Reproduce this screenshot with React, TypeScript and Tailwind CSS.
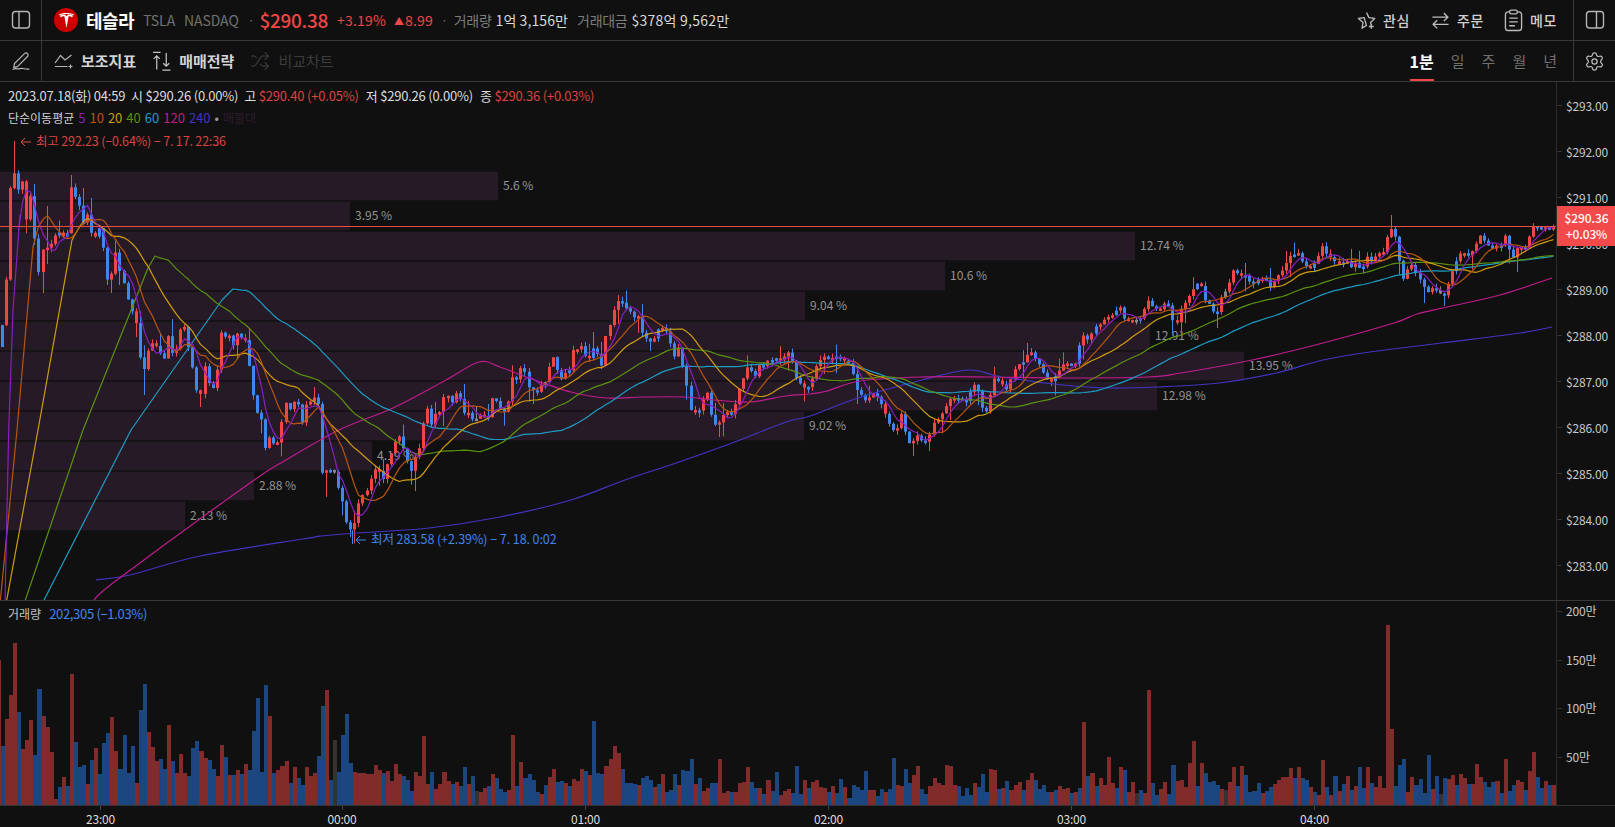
import React from "react";
import { Settings, Shuffle } from "lucide-react";
import { SiTesla } from "react-icons/si";

const V = `r120 b377 r298 r226 r70 b275 r388 r361 r301 b406 b208 r289 r322 r397 r538 b502 r472 b499 r163 b367
b442 b436 r493 b421 r385 b463 b370 b340 r292 r394 b448 b346 b460 b379 r490 b271 b193 r337 r382 r424
b418 b448 r316 b424 r460 r403 r460 b469 b385 b364 r394 r415 b421 b448 r469 r376 b412 r466 b466 r451
b463 r433 b451 b334 b235 b457 b196 r289 b460 r451 r439 r424 b490 r442 b475 b496 r442 r469 r460 b409
b259 r211 b481 g361 b457 b346 b283 b430 r457 r460 r460 r463 r463 r436 r451 b460 r454 r484 r433 r463
b469 b481 b514 r457 r469 r349 r493 b457 r508 r493 r457 r484 b493 r487 b499 b442 r493 b469 g514 r517
r505 b499 r463 b475 b508 b517 r511 r346 b499 r427 b475 b463 b481 b517 r523 b496 r472 r448 b487 b484
r490 b499 r478 r484 r448 b454 r466 b304 b460 b463 r439 r418 r379 r400 b448 b490 b490 b493 r496 b475
b469 b481 r502 b493 r463 b517 b511 b463 r496 b451 b454 b418 r493 b475 r514 r505 b490 b490 r418 r520
r514 b517 r517 r490 r487 r442 b487 b505 r505 b523 r481 b514 b457 r526 r514 r508 b520 b439 b523 r481
b505 r487 r481 r502 r505 b517 r499 b520 b478 r502 b535 b496 b502 b511 b454 r511 r511 b529 b508 r517
b508 b415 r496 r499 b448 b490 r466 r439 b508 b523 r499 r475 r490 r496 r436 r439 r496 b499 b529 b505
b526 r490 b502 b463 b517 r448 r451 b508 r505 b484 r511 r496 r487 b511 r481 r460 b481 b508 b496 b517
r517 b511 r499 r508 r505 b520 r517 b505 r307 b469 r460 b499 r475 r496 r412 r490 b505 r442 b451 r517
r487 g520 b511 r520 r211 b490 b526 r508 r487 b523 b436 r484 r481 r502 r430 r364 b499 r430 b460 b487
b484 b496 r508 g511 r487 r442 b499 r439 b466 b517 b514 b490 r520 b514 b502 r493 r481 r472 r472 r445
b475 r442 b475 b481 r502 b517 r526 r421 b502 r526 b469 r514 b493 r469 b511 r499 b442 b505 r442 b490
r502 r469 r505 r16 r328 b499 b436 b418 r517 r472 b496 b478 b520 b406 r508 b469 g523 b475 r478 r466
b496 r463 r475 b493 r493 r433 r472 b487 b502 b487 r484 b520 r418 b514 b496 r481 r487 b511 r454 r397
b472 b505 r484 b496 r496`
  .split(/\s+/)
  .map((s) => ({ c: s[0], top: Number(s.slice(1)) }));

const PATH = [
  0,347, 4,312, 7,273, 11,176, 15,173, 19,192, 23,180, 27,225, 31,192, 35,245, 39,276, 43,250, 47,248, 51,245, 55,236, 59,232, 63,236, 67,240, 71,186, 75,196, 79,203,
  83,224, 87,212, 91,232, 95,238, 99,226, 103,243, 107,280, 111,277, 115,250, 119,270, 123,278, 127,292, 131,312, 135,310, 139,345, 143,378, 147,354, 152,343, 156,345, 160,352,
  164,362, 168,334, 173,355, 177,348, 181,327, 185,327, 189,350, 193,370, 197,393, 201,394, 205,364, 209,382, 213,390, 217,375, 221,332, 225,337, 229,334, 233,347, 237,333, 241,338,
  245,337, 249,362, 253,393, 258,415, 262,420, 267,460, 270,433, 274,445, 278,442, 282,419, 286,402, 290,410, 295,401, 299,405, 303,425, 306,405, 310,402, 315,397, 319,405, 322,473,
  327,470, 331,470, 335,472, 339,490, 343,503, 347,525, 351,530, 356,520, 359,500, 364,493, 367,492, 371,480, 376,468, 379,470, 384,480, 388,462, 392,452, 396,440, 399,435, 404,450,
  407,460, 412,472, 415,458, 420,447, 424,420, 428,407, 432,427, 436,412, 440,412, 444,395, 448,395, 453,403, 457,392, 461,400, 464,413, 468,412, 473,420, 478,418, 482,413, 488,420,
  492,398, 496,400, 501,410, 505,412, 509,400, 513,374, 517,380, 522,363, 526,377, 529,387, 533,390, 538,392, 541,385, 545,384, 549,368, 554,356, 558,372, 562,380, 566,372, 570,370,
  573,350, 577,350, 581,345, 586,357, 590,358, 594,347, 598,355, 602,367, 605,337, 610,327, 614,311, 619,300, 623,303, 627,309, 631,312, 635,318, 639,316, 643,335, 646,338, 651,342,
  655,338, 659,328, 663,328, 667,332, 671,345, 675,358, 679,346, 683,370, 687,388, 691,410, 695,410, 699,412, 704,398, 708,392, 712,418, 715,425, 720,422, 724,414, 728,412, 733,415,
  736,402, 739,390, 743,380, 747,367, 751,370, 755,378, 759,365, 764,366, 768,360, 773,360, 777,358, 781,360, 785,356, 789,352, 793,362, 797,380, 801,384, 807,390, 812,380, 816,367,
  823,356, 828,358, 833,358, 838,356, 843,360, 848,362, 853,372, 858,392, 863,396, 867,403, 872,392, 877,396, 882,405, 886,415, 892,430, 897,430, 902,412, 907,440, 911,445, 917,435,
  922,441, 927,442, 933,424, 940,418, 946,407, 951,398, 956,398, 961,399, 966,402, 974,384, 979,392, 983,410, 988,412, 993,378, 998,380, 1003,385, 1007,390, 1012,375, 1018,365,
  1024,362, 1030,350, 1035,358, 1040,365, 1046,378, 1051,382, 1058,373, 1065,362, 1070,365, 1075,366, 1082,334, 1088,340, 1095,327, 1100,325, 1106,318, 1113,315, 1120,306, 1125,320,
  1131,320, 1136,320, 1141,318, 1148,300, 1153,307, 1160,310, 1167,300, 1173,322, 1177,324, 1181,310, 1186,302, 1193,290, 1200,280, 1205,300, 1211,305, 1216,318, 1221,298, 1228,288,
  1233,270, 1240,275, 1245,275, 1252,285, 1257,280, 1261,278, 1267,280, 1271,288, 1276,278, 1283,270, 1290,256, 1299,253, 1304,265, 1311,268, 1316,262, 1323,245, 1327,255, 1332,258,
  1335,262, 1339,262, 1343,264, 1347,260, 1351,268, 1355,262, 1359,268, 1363,268, 1367,256, 1371,262, 1375,257, 1379,253, 1383,254, 1387,238, 1392,228, 1396,238, 1399,258, 1403,280,
  1407,270, 1411,264, 1415,272, 1419,278, 1423,282, 1427,295, 1431,287, 1435,290, 1439,290, 1443,299, 1447,289, 1451,275, 1455,265, 1459,255, 1463,251, 1467,257, 1472,252, 1476,245,
  1480,235, 1484,240, 1488,245, 1492,249, 1497,245, 1501,248, 1504,232, 1508,242, 1512,262, 1516,250, 1520,245, 1524,251, 1528,243, 1532,226, 1536,226, 1540,229, 1544,225, 1548,231, 1552,227,
];

function pathAt(x: number) {
  if (x <= PATH[0]) return PATH[1];
  for (let i = 2; i < PATH.length; i += 2) {
    if (x <= PATH[i]) {
      const t = (x - PATH[i - 2]) / (PATH[i] - PATH[i - 2]);
      return PATH[i - 1] + (PATH[i + 1] - PATH[i - 1]) * t;
    }
  }
  return PATH[PATH.length - 1];
}

const hash = (n: number) => {
  const s = Math.sin(n * 12.9898) * 43758.5453;
  return s - Math.floor(s);
};

const left = (n: number) => Math.round(1 + 4.05 * (n - 1));
const center = (n: number) => left(n) + 1.5;
const closes = V.map((_, n) => pathAt(center(n)));
const HIGH: Record<number, number> = {
  4: 141, 18: 175, 344: 215, 12: 206, 137: 405, 21: 188, 23: 198, 43: 319, 62: 328, 78: 387, 115: 384, 147: 332, 153: 295,
};
const LOW: Record<number, number> = {
  87: 537, 375: 272, 9: 245, 1: 333, 11: 293, 27: 285, 28: 293, 36: 395, 50: 407, 81: 497, 103: 491, 161: 351, 178: 437,
  226: 456, 230: 451, 352: 303, 357: 306,
};

const candles = V.map((v, n) => {
  const cl = closes[n];
  const op = n === 0 ? cl + 40 : closes[n - 1];
  const top = Math.min(cl, op);
  const bot = Math.max(cl, op, top + 2.5);
  const a = hash(n + 1);
  const b = hash(n + 501);
  const hi = HIGH[n] ?? top - (n > 365 ? a * 3 : a > 0.9 ? 12 : a * 5);
  const lo = LOW[n] ?? bot + (b > 0.9 ? 14 : b * 5);
  return { n, c: v.c, top, bot, hi, lo };
});

function ma(N: number, from: number, prefix: number[][]) {
  const pts: string[] = prefix.map((p) => p.join(","));
  for (let i = from; i < closes.length; i++) {
    let s = 0;
    for (let j = i - N + 1; j <= i; j++) s += closes[Math.max(0, j)];
    pts.push(`${center(i)},${(s / N).toFixed(1)}`);
  }
  return `M${pts.join(" L")}`;
}

function smooth(s: string) {
  const p = s.split(" ").map((q) => q.split(",").map(Number));
  let d = `M${p[0][0]} ${p[0][1]}`;
  for (let i = 0; i < p.length - 1; i++) {
    const a = p[Math.max(0, i - 1)];
    const b = p[i];
    const c = p[i + 1];
    const e = p[Math.min(p.length - 1, i + 2)];
    const c1 = [b[0] + (c[0] - a[0]) / 6, b[1] + (c[1] - a[1]) / 6];
    const c2 = [c[0] - (e[0] - b[0]) / 6, c[1] - (e[1] - b[1]) / 6];
    d += ` C${c1[0].toFixed(1)} ${c1[1].toFixed(1)} ${c2[0].toFixed(1)} ${c2[1].toFixed(1)} ${c[0]} ${c[1]}`;
  }
  return d;
}

const MA240 = smooth("96,580 130,575 200,556 303,539 321,536 357,533 429,528 500,517 571,500 625,480 679,462 732,443 786,422 810,416 858,398 922,380 969,370 1002,377 1063,385 1110,388 1157,387 1219,383 1276,373 1323,360 1370,352 1441,343 1520,333 1552,327");
const MA120 = smooth("94,600 117,580 250,483 286,460 339,430 393,408 446,380 479,362 500,367 529,378 571,392 607,398 643,397 686,397 714,400 750,402 786,396 810,394 827,391 860,381 922,377 992,377 1063,378 1148,377 1181,373 1252,360 1323,343 1394,323 1417,314 1447,307 1500,295 1552,278");

const LINES: [string, string][] = [
  [MA240, "#4334c4"],
  [MA120, "#bf1d8d"],
  [ma(60, 60, [[42, 604], [131, 430], [222, 300], [233, 289]]), "#1c9cc4"],
  [ma(40, 40, [[24, 604], [83, 430], [148, 268], [155, 256]]), "#5a930f"],
  [ma(20, 20, [[6, 604], [38, 430], [72, 240]]), "#cf9d0c"],
  [ma(10, 10, [[0, 604], [17, 430], [33, 247]]), "#b8560f"],
  [ma(5, 5, [[5, 604], [8.7, 430], [13, 310], [20, 215]]), "#8a1fc0"],
];

const ROWS: [number, string][] = [
  [498, "5.6 %"], [350, "3.95 %"], [1135, "12.74 %"], [945, "10.6 %"], [805, "9.04 %"], [1150, "12.91 %"],
  [1244, "13.95 %"], [1157, "12.98 %"], [804, "9.02 %"], [372, "4.19 %"], [254, "2.88 %"], [185, "2.13 %"],
];

const PRICES = [293, 292, 291, 290, 289, 288, 287, 286, 285, 284, 283];
const VOLS: [string, number][] = [["200만", 611], ["150만", 660], ["100만", 708], ["50만", 757]];
const TIMES: [string, number][] = [["23:00", 100.5], ["00:00", 342], ["01:00", 585.5], ["02:00", 828.5], ["03:00", 1071.5], ["04:00", 1314.5]];

function Chart() {
  return (
    <svg viewBox="0 82 1556 518" className="h-[518px] w-[1556px] shrink-0">
      {ROWS.map(([w, label], i) => {
        const y = 171.7 + 30 * i;
        return (
          <g key={label}>
            <rect x={0} y={y} width={w} height={28.6} className="fill-[#271a27]" />
            <text x={w + 5} y={y + 18} className="fill-[#949494] text-[12px]">{label}</text>
          </g>
        );
      })}
      {candles.map((k) => {
        const col = k.c === "r" ? "#f04646" : k.c === "b" ? "#3f86ee" : "#888888";
        const x = left(k.n);
        return (
          <g key={k.n}>
            <rect x={x + 1} y={k.hi} width={1} height={k.lo - k.hi} fill={col} />
            <rect x={x} y={k.top} width={3} height={k.bot - k.top} fill={col} />
          </g>
        );
      })}
      {LINES.map(([d, col]) => (
        <path key={col} d={d} fill="none" stroke={col} strokeWidth={1.2} strokeLinejoin="round" />
      ))}
      <rect x={0} y={226} width={1556} height={1} className="fill-[#ee4b45]" />
      <path d="M31 142H21M25 138l-4 4 4 4" fill="none" stroke="#e24a44" strokeWidth={1} />
      <text x={36} y={146} className="fill-[#d9453f] text-[12.5px] tracking-[-0.16px]">최고 292.23 (−0.64%) − 7. 17. 22:36</text>
      <rect x={352} y={530} width={1} height={14} className="fill-[#3f86ee]" />
      <path d="M366 540H356M360 536l-4 4 4 4" fill="none" stroke="#3f86ee" strokeWidth={1} />
      <text x={371} y={544} className="fill-[#3f86ee] text-[12.5px] tracking-[-0.08px]">최저 283.58 (+2.39%) − 7. 18. 0:02</text>
    </svg>
  );
}

function Volumes() {
  return (
    <svg viewBox="0 601 1556 204" className="h-[204px] w-[1556px] shrink-0" shapeRendering="crispEdges">
      {V.map((v, n) => (
        <rect
          key={n}
          x={left(n)}
          y={620 + v.top / 3}
          width={left(n + 1) - left(n)}
          height={(556 - v.top) / 3}
          fill={v.c === "r" ? "#812b2b" : v.c === "b" ? "#1b4680" : "#333333"}
        />
      ))}
    </svg>
  );
}

const Tab = ({ children, active }: { children: React.ReactNode; active?: boolean }) => (
  <div className={`relative flex h-full items-center ${active ? "text-[16px] font-bold text-white" : "text-[15px] text-[#6f6f6f]"}`}>
    {children}
    {active && <span className="absolute bottom-0 left-0 h-[2px] w-full bg-[#f04646]" />}
  </div>
);

const Cell = ({ children, side }: { children: React.ReactNode; side: "l" | "r" }) => (
  <div className={`flex shrink-0 items-center justify-center border-[#383838] ${side === "l" ? "w-[42px] border-r" : "w-[42px] border-l"}`}>
    {children}
  </div>
);

export default function App() {
  return (
    <div className="h-[827px] w-[1615px] overflow-hidden bg-[#101010] font-['Noto_Sans_CJK_KR','Noto_Sans',sans-serif] text-[#cfcfcf]">
      <div className="flex h-[41px] border-b border-[#383838]">
        <Cell side="l">
          <svg width="20" height="20" viewBox="0 0 20 20" fill="none" stroke="#b5b5b5" strokeWidth="1.4">
            <rect x="1.5" y="1.5" width="17" height="16.5" rx="3" />
            <path d="M8 1.5V18" />
          </svg>
        </Cell>
        <div className="flex flex-1 items-center whitespace-nowrap pl-[12px]">
          <div className="flex h-[24px] w-[24px] items-center justify-center rounded-full bg-[#cc0000]">
            <SiTesla className="h-[15px] w-[15px] text-white" />
          </div>
          <span className="ml-[8px] text-[18px] font-bold leading-none tracking-[-0.5px] text-white">테슬라</span>
          <span className="ml-[9px] text-[14px] tracking-[-0.1px] text-[#707070]">TSLA</span>
          <span className="ml-[9px] text-[14px] tracking-[-0.1px] text-[#707070]">NASDAQ</span>
          <span className="ml-[9px] text-[12px] text-[#707070]">·</span>
          <span className="ml-[5px] text-[19px] font-medium tracking-[-0.3px] text-[#f04646]">$290.38</span>
          <span className="ml-[9px] text-[14px] tracking-[0.2px] text-[#f04646]">+3.19%</span>
          <span className="ml-[8px] text-[10px] text-[#f04646]">▲</span>
          <span className="ml-[1px] text-[14px] tracking-[0.2px] text-[#f04646]">8.99</span>
          <span className="ml-[8px] text-[12px] text-[#707070]">·</span>
          <span className="ml-[6px] text-[14px] tracking-[-0.3px] text-[#7c7c7c]">거래량</span>
          <span className="ml-[4px] text-[14px] tracking-[0.1px] text-[#d8d8d8]">1억 3,156만</span>
          <span className="ml-[9px] text-[14px] tracking-[-0.3px] text-[#7c7c7c]">거래대금</span>
          <span className="ml-[4px] text-[14px] tracking-[0.25px] text-[#d8d8d8]">$378억 9,562만</span>
          <div className="ml-auto flex items-center pr-[16px] text-[14px] font-medium tracking-[0.6px] text-[#d0d0d0]">
            <svg width="19" height="19" viewBox="0 0 20 20" fill="none" stroke="#bcbcbc" strokeWidth="1.4" strokeLinejoin="round">
              <path d="M10 1.5l2.6 5.5 6 .8-4.4 4.2.6 2.2M10 15.2l-4.7 2.9 1.1-6L1.5 7.8l6-.8z" />
              <path d="M15 13.8v5M12.5 16.3h5" />
            </svg>
            <span className="ml-[7px]">관심</span>
            <svg className="ml-[21px]" width="19" height="19" viewBox="0 0 20 20" fill="none" stroke="#bcbcbc" strokeWidth="1.4">
              <path d="M1.5 6.5h16M13.5 2.2l4.3 4.3-4.3 4M18.5 14H2.5M6.5 9.8L2.2 14l4.3 4.3" />
            </svg>
            <span className="ml-[7px]">주문</span>
            <svg className="ml-[20px]" width="19" height="23" viewBox="0 0 20 24" fill="none" stroke="#bcbcbc" strokeWidth="1.4">
              <rect x="1.5" y="3" width="17" height="19.5" rx="3" />
              <rect x="6" y="1" width="8" height="4" rx="1.5" fill="#101010" />
              <path d="M5.5 9.5h9M5.5 13.5h9M5.5 17.5h6" />
            </svg>
            <span className="ml-[7px]">메모</span>
          </div>
        </div>
        <Cell side="r">
          <svg width="20" height="20" viewBox="0 0 20 20" fill="none" stroke="#b5b5b5" strokeWidth="1.4">
            <rect x="1.5" y="1.5" width="17" height="16.5" rx="3" />
            <path d="M11.5 1.5V18" />
          </svg>
        </Cell>
      </div>

      <div className="flex h-[41px] border-b border-[#383838]">
        <Cell side="l">
          <svg width="20" height="20" viewBox="0 0 20 20" fill="none" stroke="#b5b5b5" strokeWidth="1.2" strokeLinejoin="round">
            <path d="M3.5 12.5L13.5 2.6a2 2 0 0 1 3 0 2 2 0 0 1 0 2.9L6.5 15.6l-3.8 1z" />
            <path d="M1.5 18.5c2-1 3.5-1.2 5-.6s3-.8 4.4-.6 3 .9 7.6.7" />
          </svg>
        </Cell>
        <div className="flex flex-1 items-center whitespace-nowrap pl-[12px]">
          <svg width="20" height="20" viewBox="0 0 20 20" fill="none" stroke="#b5b5b5" strokeWidth="1.2">
            <path d="M1 12L6.5 4.5l4.5 4.5L17.5 4" />
            <path d="M1 15.5h12.5M16.5 13.5v4M14.5 15.5h4" />
          </svg>
          <span className="ml-[7px] text-[15px] font-bold text-[#d4d4d4]">보조지표</span>
          <svg className="ml-[16px]" width="19" height="21" viewBox="0 0 20 22" fill="none" stroke="#c4c4c4" strokeWidth="1.3">
            <path d="M1 1.5h8M5 19.5V5M1.8 8.2L5 5l3.2 3.2M15 2v14M11.8 12.8L15 16l3.2-3.2M11 20h8.5" />
          </svg>
          <span className="ml-[8px] text-[15px] font-bold text-[#d4d4d4]">매매전략</span>
          <Shuffle className="ml-[16px] text-[#3a3a3a]" size={20} strokeWidth={1.5} />
          <span className="ml-[8px] text-[15px] text-[#3c3c3c]">비교차트</span>
          <div className="ml-auto mr-[16px] flex h-full gap-[17px]">
            <Tab active>1분</Tab>
            <Tab>일</Tab>
            <Tab>주</Tab>
            <Tab>월</Tab>
            <Tab>년</Tab>
          </div>
        </div>
        <Cell side="r">
          <Settings size={21} strokeWidth={1.4} className="text-[#bcbcbc]" />
        </Cell>
      </div>

      <div className="relative flex h-[519px] border-b border-[#383838]">
        <Chart />
        <div className="relative flex-1 border-l border-[#2c2c2c]">
          {PRICES.map((p, i) => (
            <div key={p} className="absolute left-0 flex h-[14px] items-center" style={{ top: 105.5 - 82 + 46 * i - 7 }}>
              <span className="h-px w-[5px] bg-[#333333]" />
              <span className="ml-[4px] text-[12px] tracking-[-0.2px] text-[#c8c8c8]">${p}.00</span>
            </div>
          ))}
          <div className="absolute left-0 top-[124px] flex h-[40px] w-[59px] flex-col items-center justify-center bg-[#f24a4a] text-[12px] font-medium leading-[16px] tracking-[-0.1px] text-white">
            <span>$290.36</span>
            <span>+0.03%</span>
          </div>
        </div>
        <div className="absolute left-[8px] top-[5px] flex flex-col gap-[4px] whitespace-nowrap leading-[18px]">
          <div className="text-[13px] tracking-[-0.2px] text-[#dcdcdc]">
            2023.07.18(화) 04:59 <span className="ml-[3px]">시 $290.26 (0.00%)</span>
            <span className="ml-[6px]">고 <span className="text-[#d9453f]">$290.40 (+0.05%)</span></span>
            <span className="ml-[7px]">저 $290.26 (0.00%)</span>
            <span className="ml-[7px]">종 <span className="text-[#d9453f]">$290.36 (+0.03%)</span></span>
          </div>
          <div className="flex items-center gap-[4px] text-[13px] text-[#cfcfcf]">
            <span className="text-[12px]">단순이동평균</span>
            <span className="text-[#8a1fc0]">5</span>
            <span className="text-[#b8560f]">10</span>
            <span className="text-[#cf9d0c]">20</span>
            <span className="text-[#5a930f]">40</span>
            <span className="text-[#1c9cc4]">60</span>
            <span className="text-[#bf1d8d]">120</span>
            <span className="text-[#4334c4]">240</span>
            <span className="text-[#999999]">•</span>
            <span className="text-[12px] text-[#2b1d2b]">매물대</span>
          </div>
        </div>
      </div>

      <div className="relative flex h-[205px] border-b border-[#333333]">
        <Volumes />
        <div className="relative flex-1 border-l border-[#2c2c2c]">
          {VOLS.map(([label, y]) => (
            <div key={label} className="absolute left-0 flex h-[14px] items-center" style={{ top: y - 601 - 7 }}>
              <span className="h-px w-[5px] bg-[#333333]" />
              <span className="ml-[4px] text-[12px] tracking-[-0.2px] text-[#c8c8c8]">{label}</span>
            </div>
          ))}
        </div>
        <div className="absolute left-[8px] top-[4px] flex items-center gap-[8px] whitespace-nowrap leading-[18px]">
          <span className="text-[12px] text-[#c4c4c4]">거래량</span>
          <span className="text-[13px] tracking-[-0.32px] text-[#3f86ee]">202,305 (−1.03%)</span>
        </div>
      </div>

      <div className="relative h-[21px]">
        {TIMES.map(([label, x]) => (
          <div key={label} className="absolute top-0 flex w-[40px] flex-col items-center" style={{ left: x - 20 }}>
            <span className="h-[4px] w-px bg-[#444444]" />
            <span className="mt-[1px] text-[12px] leading-[15px] tracking-[-0.2px] text-[#dedede]">{label}</span>
          </div>
        ))}
      </div>
    </div>
  );
}
